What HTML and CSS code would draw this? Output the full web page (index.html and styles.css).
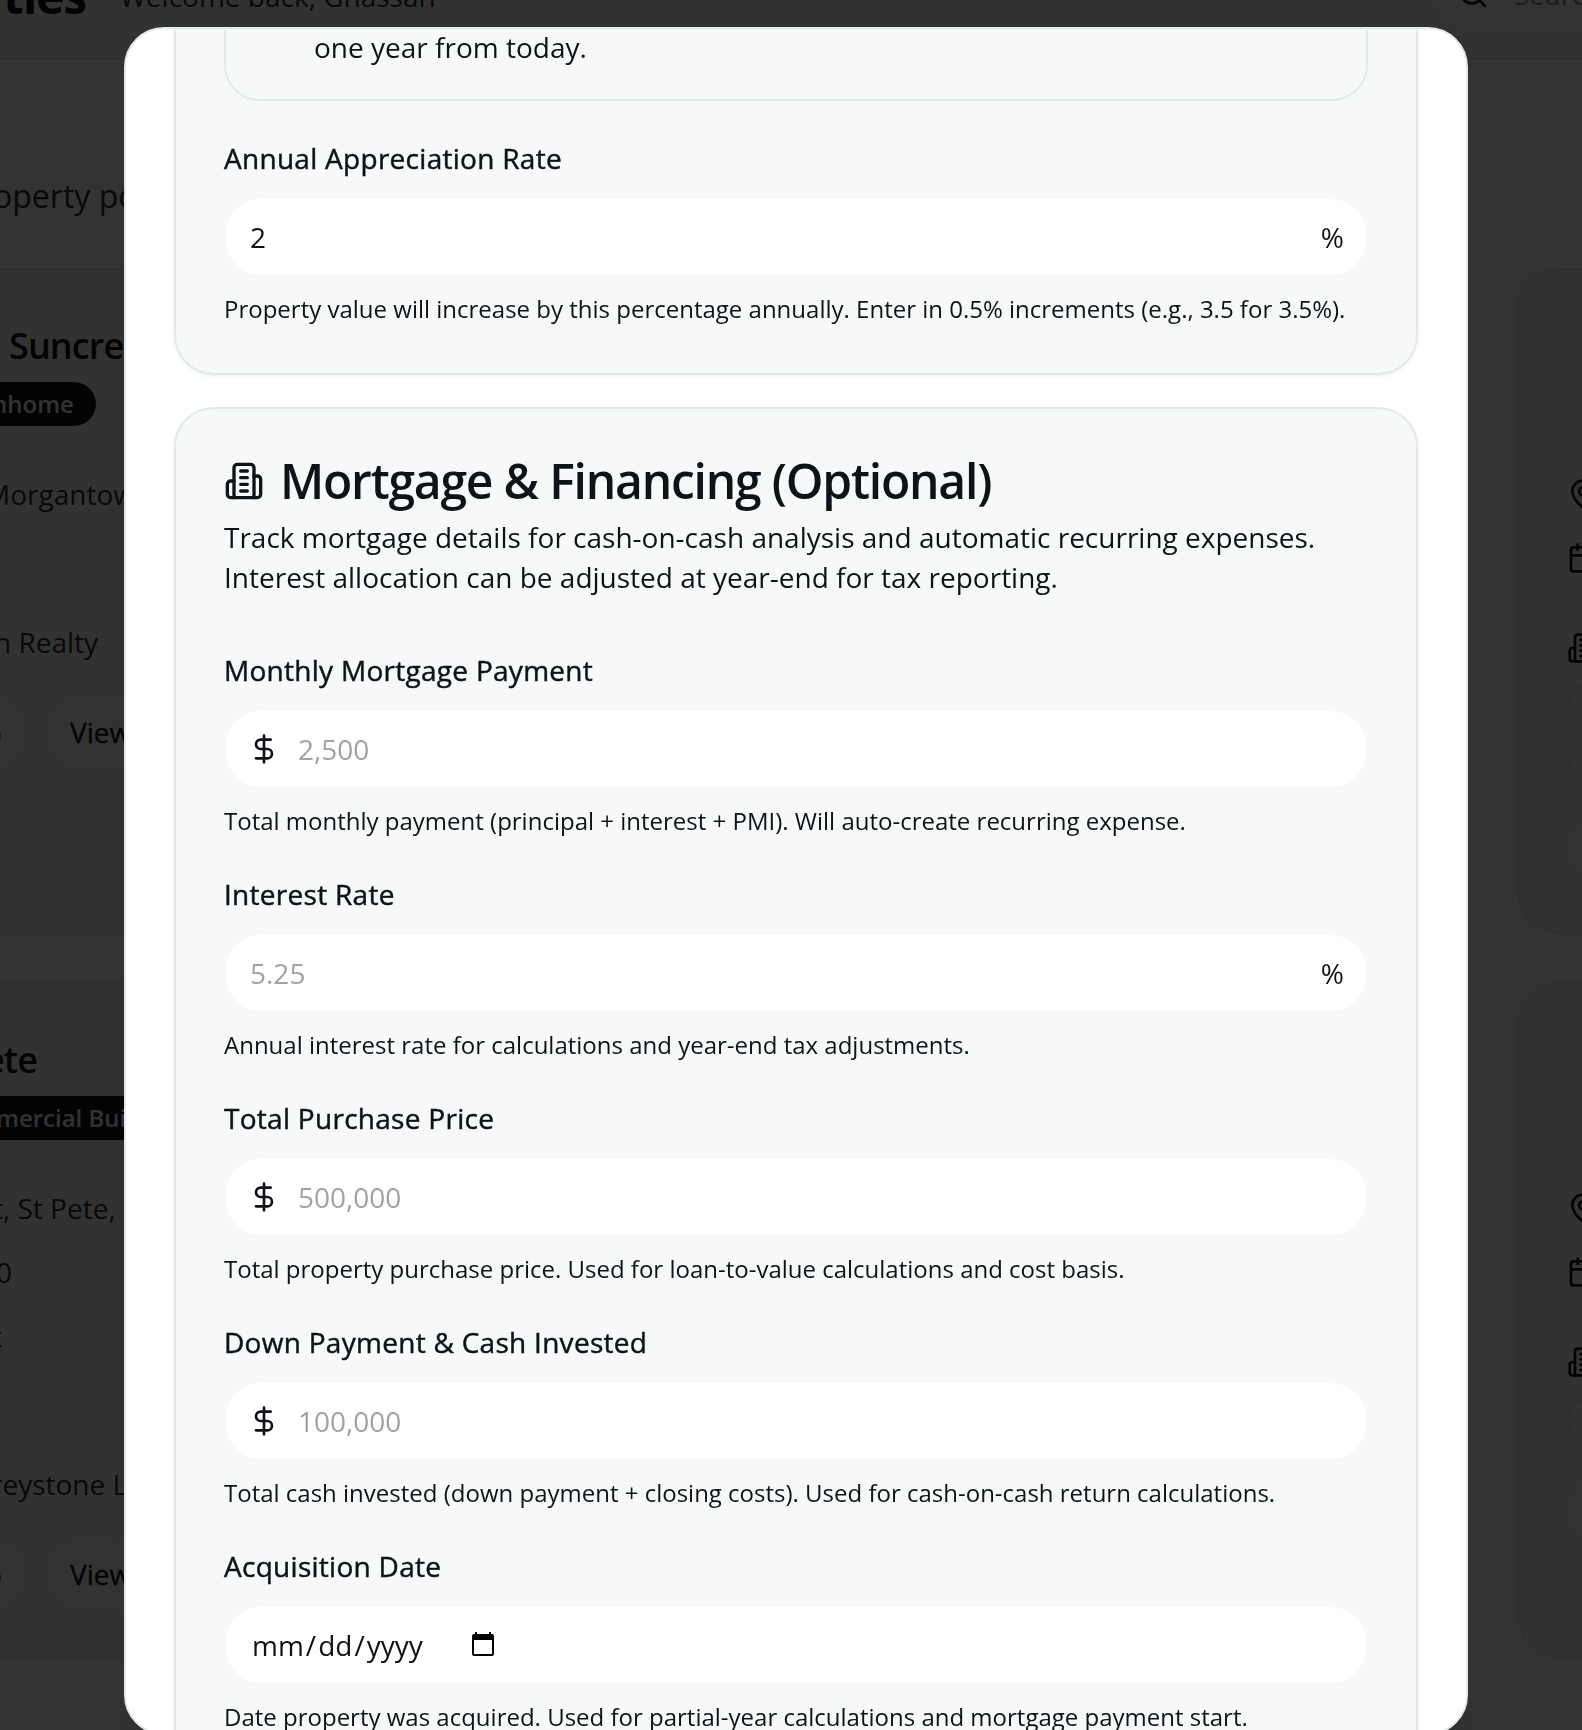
FILE: index.html
```html
<!DOCTYPE html>
<html lang="en">
<head>
<meta charset="utf-8">
<title>Properties</title>
<link rel="stylesheet" href="styles.css">
</head>
<body>
<svg class="sprite" width="0" height="0">
  <symbol id="building" viewBox="0 0 24 24"><path d="M6 22V4a2 2 0 0 1 2-2h8a2 2 0 0 1 2 2v18Z"/><path d="M6 12H4a2 2 0 0 0-2 2v6a2 2 0 0 0 2 2h2"/><path d="M18 9h2a2 2 0 0 1 2 2v9a2 2 0 0 1-2 2h-2"/><path d="M10 6h4M10 10h4M10 14h4M10 18h4"/></symbol>
  <symbol id="dollar" viewBox="0 0 24 24"><path d="M12 2v20"/><path d="M17 5H9.5a3.5 3.5 0 0 0 0 7h5a3.5 3.5 0 0 1 0 7H6"/></symbol>
  <symbol id="pin" viewBox="0 0 24 24"><path d="M20 10c0 4.993-5.539 10.193-7.399 11.799a1 1 0 0 1-1.202 0C9.539 20.193 4 14.993 4 10a8 8 0 0 1 16 0"/><circle cx="12" cy="10" r="3"/></symbol>
  <symbol id="calendar" viewBox="0 0 24 24"><path d="M8 2v4M16 2v4"/><rect width="18" height="18" x="3" y="4" rx="2"/><path d="M3 10h18"/></symbol>
  <symbol id="search" viewBox="0 0 24 24"><circle cx="11" cy="11" r="8"/><path d="m21 21-4.3-4.3"/></symbol>
</svg>

<div class="page">
  <header class="topbar">
    <h1 class="topbar-title">ties</h1>
    <span class="topbar-welcome">Welcome back, Ghassan</span>
    <div class="search"><svg class="icon"><use href="#search"/></svg><span>Search</span></div>
  </header>
  <p class="intro">operty portfolio</p>
  <div class="grid">
    <section class="card property">
      <h2 class="property-name">Suncrest</h2>
      <span class="tag">nhome</span>
      <p class="line address">Morgantown</p>
      <hr class="rule">
      <p class="line owner">n Realty</p>
      <div class="actions"><span class="pill first">Map</span><span class="pill">View Details</span></div>
    </section>
    <section class="card side">
      <svg class="icon"><use href="#pin"/></svg>
      <svg class="icon"><use href="#calendar"/></svg>
      <hr class="rule">
      <svg class="icon"><use href="#building"/></svg>
      <span class="chip"></span>
      <span class="chip"></span>
      <span class="side-button"></span>
    </section>
    <section class="card property second">
      <h2 class="property-name">ete</h2>
      <span class="tag wide">mercial Building</span>
      <p class="line address">t, St Pete,</p>
      <p class="line units">0</p>
      <p class="line kind">t</p>
      <hr class="rule">
      <p class="line owner">reystone LLC</p>
      <div class="actions"><span class="pill first">Map</span><span class="pill">View Details</span></div>
    </section>
    <section class="card side second">
      <svg class="icon"><use href="#pin"/></svg>
      <svg class="icon"><use href="#calendar"/></svg>
      <hr class="rule">
      <svg class="icon"><use href="#building"/></svg>
      <span class="chip"></span>
      <span class="side-button"></span>
    </section>
  </div>
</div>

<div class="overlay">
  <div class="dialog" role="dialog">
    <section class="panel valuation">
      <div class="notice">one year from today.</div>
      <div class="field">
        <label class="label">Annual Appreciation Rate</label>
        <div class="input"><span class="value">2</span><span class="suffix">%</span></div>
        <p class="help">Property value will increase by this percentage annually. Enter in 0.5% increments (e.g., 3.5 for 3.5%).</p>
      </div>
    </section>
    <section class="panel mortgage">
      <h2 class="panel-title"><svg class="icon"><use href="#building"/></svg><span>Mortgage &amp; Financing (Optional)</span></h2>
      <p class="panel-text">Track mortgage details for cash-on-cash analysis and automatic recurring expenses. Interest allocation can be adjusted at year-end for tax reporting.</p>
      <div class="fields">
        <div class="field">
          <label class="label">Monthly Mortgage Payment</label>
          <div class="input"><svg class="icon"><use href="#dollar"/></svg><span class="placeholder">2,500</span></div>
          <p class="help">Total monthly payment (principal + interest + PMI). Will auto-create recurring expense.</p>
        </div>
        <div class="field">
          <label class="label">Interest Rate</label>
          <div class="input"><span class="placeholder">5.25</span><span class="suffix">%</span></div>
          <p class="help">Annual interest rate for calculations and year-end tax adjustments.</p>
        </div>
        <div class="field">
          <label class="label">Total Purchase Price</label>
          <div class="input"><svg class="icon"><use href="#dollar"/></svg><span class="placeholder">500,000</span></div>
          <p class="help">Total property purchase price. Used for loan-to-value calculations and cost basis.</p>
        </div>
        <div class="field">
          <label class="label">Down Payment &amp; Cash Invested</label>
          <div class="input"><svg class="icon"><use href="#dollar"/></svg><span class="placeholder">100,000</span></div>
          <p class="help">Total cash invested (down payment + closing costs). Used for cash-on-cash return calculations.</p>
        </div>
        <div class="field">
          <label class="label">Acquisition Date</label>
          <div class="input date"><span class="value">mm<i>/</i>dd<i>/</i>yyyy</span><svg class="picker" viewBox="0 0 22 24"><path fill-rule="evenodd" d="M3 0h2v2h12V0h2v2h1a2 2 0 0 1 2 2v18a2 2 0 0 1-2 2H2a2 2 0 0 1-2-2V4a2 2 0 0 1 2-2h1ZM2 8v14h18V8Z"/></svg></div>
          <p class="help">Date property was acquired. Used for partial-year calculations and mortgage payment start.</p>
        </div>
      </div>
    </section>
  </div>
</div>
</body>
</html>
```
FILE: styles.css
```css
* { box-sizing: border-box; margin: 0; padding: 0; }
html, body { height: 1730px; overflow: hidden; }
body {
  font-family: "Open Sans", "Noto Sans", sans-serif;
  font-size: 28px;
  line-height: 40px;
  color: #0f1217;
  background: #fff;
}
.sprite { position: absolute; }
.icon {
  width: 32px; height: 32px; flex: none; display: block;
  fill: none; stroke: currentColor; stroke-width: 2;
  stroke-linecap: round; stroke-linejoin: round;
}

/* Page behind the dialog */
.page { height: 1730px; overflow: hidden; white-space: nowrap; }
.topbar {
  height: 60px; background: #f7f9f9; border-bottom: 2px solid #e2e9ed;
  display: flex; align-items: flex-start;
}
.topbar-title { font-size: 48px; font-weight: 700; line-height: 56px; margin: -32px 0 0 3px; width: 117px; letter-spacing: -1.2px; }
.topbar-welcome { margin-top: -24px; color: #2b2f33; }
.search {
  margin: -45px -200px 0 auto; width: 349px; height: 78px; border-radius: 38px; background: #fff;
  display: flex; align-items: center; gap: 25px; padding: 0 24px; color: #8b8b8b; flex: none;
}
.search .icon { color: #0f1217; }
.intro { font-size: 32px; line-height: 48px; margin: 112px 0 0 -7px; height: 96px; color: #2b2f33; }
.grid { display: grid; grid-template-columns: 1300px 400px; column-gap: 217px; row-gap: 48px; height: 1400px; grid-template-rows: 666px 677px; }
.card { background: #f7f9f9; border: 2px solid #e2e9ed; border-radius: 44px; }
.grid .property { border-left: 0; border-radius: 0; display: flex; flex-direction: column; align-items: flex-start; }
.property-name { font-size: 36px; font-weight: 600; line-height: 44px; margin: 54px 0 0 9px; letter-spacing: -0.9px; }
.tag { background: #0f1217; color: #f7f9f9; font-size: 24px; font-weight: 600; line-height: 44px; height: 44px; border-radius: 22px; padding: 0 22px 0 40px; margin: 14px 0 0 -48px; }
.tag.wide { margin-left: -44px; }
.line { color: #2b2f33; }
.address { margin: 48px 0 0 -15px; }
.rule { border: 0; border-top: 2px solid #e2e9ed; width: 100%; }
.property .rule { margin-top: 24px; }
.owner { margin: 82px 0 0 -6px; }
.actions { display: flex; gap: 20px; margin-top: 34px; }
.pill { background: #fff; height: 72px; line-height: 72px; border-radius: 36px; padding: 0 25px; -webkit-text-stroke: 0.3px currentColor; }
.pill.first { margin-left: -80px; padding: 0 0 0 24px; width: 105px; }

.side { padding-left: 48px; }
.side .icon { margin-top: 208px; }
.side .icon + .icon { margin-top: 32px; }
.side .rule { margin-top: 28px; }
.side .rule + .icon { margin-top: 28px; }
.chip { display: block; width: 120px; height: 44px; border: 2px solid #e2e9ed; border-radius: 22px; margin-top: 20px; }
.chip + .chip { margin-top: 8px; }
.side-button { display: block; width: 200px; height: 76px; margin: 30px 0 0 2px; border-radius: 38px; background: #fff; }

.second .property-name { margin-left: -16px; }
.second .address { margin: 48px 0 0 -7px; }
.units { margin: 24px 0 0 -4px; }
.kind { margin: 24px 0 0 -8px; }
.second .owner { margin: 82px 0 0 -9px; }

/* Dialog */
.overlay { position: fixed; inset: 0; overflow: hidden; background: rgba(0, 0, 0, .8); }
.dialog {
  width: 1344px; height: 1708px; margin: 27px 0 0 124px; padding: 0 48px; overflow: hidden;
  background: #fff; border: 2px solid #e2e9ed; border-radius: 40px;
  box-shadow: 0 20px 30px -6px rgba(0,0,0,.1), 0 8px 12px -8px rgba(0,0,0,.1);
  display: flex; flex-direction: column; gap: 32px;
}
.panel {
  flex: none; background: #f7f9f9; border: 2px solid #e2e9ed; border-radius: 40px; padding: 0 48px;
  box-shadow: 0 2px 4px rgba(0,0,0,.05);
}
.valuation { height: 400px; margin-top: -54px; }
.notice { height: 124px; border: 2px solid #e2e9ed; border-radius: 36px; padding: 48px 0 0 88px; }
.field { display: flex; flex-direction: column; height: 224px; }
.valuation .field { margin-top: 43px; }
/* Medium weight, between the installed regular and semibold faces */
.label { letter-spacing: 0.28px; -webkit-text-stroke: 0.45px currentColor; line-height: 28px; margin-bottom: 25px; }
.input {
  height: 80px; flex: none; border: 2px solid transparent; border-radius: 38px; padding: 0 24px;
  background: #fff padding-box; display: flex; align-items: center;
}
.input .icon { margin-left: -2px; margin-right: 18px; }
.suffix { margin-left: auto; margin-right: -2px; }
.placeholder { color: #a3a3a3; }
.help { font-size: 24px; line-height: 32px; margin-top: 16px; white-space: nowrap; }
.mortgage { height: 1400px; padding-top: 48px; }
.panel-title { display: flex; align-items: center; gap: 16px; font-size: 48px; line-height: 48px; font-weight: 600; letter-spacing: -1.2px; height: 48px; }
.panel-title .icon { width: 40px; height: 40px; }
.panel-text { margin-top: 12px; }
.fields { margin-top: 59px; }
.date .value { padding-left: 2px; }
.date i { font-style: normal; padding: 0 2px; }
.picker { width: 22px; height: 24px; margin: 0 0 2px 49px; fill: #000; }
```
